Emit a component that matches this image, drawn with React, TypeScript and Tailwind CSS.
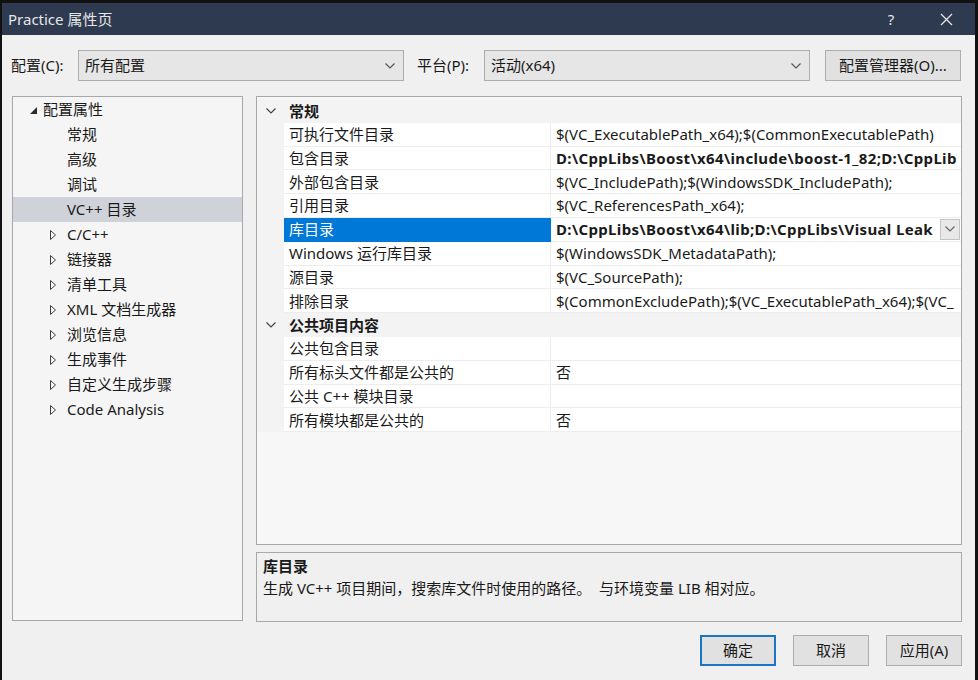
import React from 'react';

const font = "font-['Noto_Sans','Noto_Sans_CJK_SC',sans-serif]";

const Chevron: React.FC<{ className?: string }> = ({ className }) => (
  <svg width="10" height="6" viewBox="0 0 10 6" className={className}>
    <path d="M0.5 0.5L5 5L9.5 0.5" fill="none" stroke="currentColor" strokeWidth="1.2" />
  </svg>
);

const ExpandedArrow = () => (
  <svg width="7" height="7" viewBox="0 0 7 7">
    <polygon points="7,0 7,7 0,7" fill="#2b2b2b" />
  </svg>
);

const CollapsedArrow = () => (
  <svg width="6" height="10" viewBox="0 0 6 10">
    <polygon points="0.5,0.5 5.5,5 0.5,9.5" fill="none" stroke="#3c3c3c" strokeWidth="1" />
  </svg>
);

const treeItems: { label: string; collapsed?: boolean; selected?: boolean }[] = [
  { label: '常规' },
  { label: '高级' },
  { label: '调试' },
  { label: 'VC++ 目录', selected: true },
  { label: 'C/C++', collapsed: true },
  { label: '链接器', collapsed: true },
  { label: '清单工具', collapsed: true },
  { label: 'XML 文档生成器', collapsed: true },
  { label: '浏览信息', collapsed: true },
  { label: '生成事件', collapsed: true },
  { label: '自定义生成步骤', collapsed: true },
  { label: 'Code Analysis', collapsed: true },
];

type Row =
  | { kind: 'header'; label: string }
  | { kind: 'prop'; name: string; value: string; bold?: boolean; selected?: boolean };

const rows: Row[] = [
  { kind: 'header', label: '常规' },
  { kind: 'prop', name: '可执行文件目录', value: '$(VC_ExecutablePath_x64);$(CommonExecutablePath)' },
  { kind: 'prop', name: '包含目录', value: 'D:\\CppLibs\\Boost\\x64\\include\\boost-1_82;D:\\CppLib', bold: true },
  { kind: 'prop', name: '外部包含目录', value: '$(VC_IncludePath);$(WindowsSDK_IncludePath);' },
  { kind: 'prop', name: '引用目录', value: '$(VC_ReferencesPath_x64);' },
  { kind: 'prop', name: '库目录', value: 'D:\\CppLibs\\Boost\\x64\\lib;D:\\CppLibs\\Visual Leak', bold: true, selected: true },
  { kind: 'prop', name: 'Windows 运行库目录', value: '$(WindowsSDK_MetadataPath);' },
  { kind: 'prop', name: '源目录', value: '$(VC_SourcePath);' },
  { kind: 'prop', name: '排除目录', value: '$(CommonExcludePath);$(VC_ExecutablePath_x64);$(VC_' },
  { kind: 'header', label: '公共项目内容' },
  { kind: 'prop', name: '公共包含目录', value: '' },
  { kind: 'prop', name: '所有标头文件都是公共的', value: '否' },
  { kind: 'prop', name: '公共 C++ 模块目录', value: '' },
  { kind: 'prop', name: '所有模块都是公共的', value: '否' },
];

const Combo: React.FC<{ value: string }> = ({ value }) => (
  <div className="w-[326px] h-[31px] flex items-center justify-between pl-[6px] pr-[8px] bg-[#e6e6e6] border border-[#adadad]">
    <span>{value}</span>
    <Chevron className="text-[#555]" />
  </div>
);

const Button: React.FC<{ label: string; primary?: boolean }> = ({ label, primary }) => (
  <div
    className={`w-[76px] h-[31px] flex items-center justify-center bg-[#e1e1e1] ${
      primary ? 'border-2 border-[#1c74c4]' : 'border border-[#adadad]'
    }`}
  >
    {label}
  </div>
);

export default function App() {
  return (
    <div className={`w-[978px] h-[680px] bg-[#111] pt-[3px] pl-[2px] pr-[3px] overflow-hidden text-[15px] text-[#1a1a1a] ${font}`}>
      <div className="h-full flex flex-col bg-[#f0f0f0]">
        {/* Title bar */}
        <div className="h-[32px] shrink-0 flex items-center bg-[#2e3a50] text-[#e6e6e6] pl-[6px]">
          <span className="flex-1">Practice 属性页</span>
          <span className="w-[20px] text-center mr-[39px]">?</span>
          <svg width="13" height="13" viewBox="0 0 13 13" className="mr-[22px]">
            <path d="M1 1L12 12M12 1L1 12" stroke="#e6e6e6" strokeWidth="1.3" />
          </svg>
        </div>

        {/* Config toolbar */}
        <div className="flex items-center mt-[15px] pl-[9px] pr-[12px]">
          <span className="w-[67px]">配置(C):</span>
          <Combo value="所有配置" />
          <span className="ml-[13px] w-[67px]">平台(P):</span>
          <Combo value="活动(x64)" />
          <div className="ml-[15px] w-[136px] h-[31px] flex items-center justify-center bg-[#e1e1e1] border border-[#adadad]">
            配置管理器(O)...
          </div>
        </div>

        {/* Main area */}
        <div className="flex mt-[15px] pl-[10px] gap-[13px]">
          {/* Tree */}
          <div className="w-[231px] h-[525px] bg-[#f5f5f5] border border-[#a8a8a8]">
            <div className="h-[25px] flex items-center">
              <span className="w-[30px] flex justify-end pr-[6px] pt-[1px]">
                <ExpandedArrow />
              </span>
              <span>配置属性</span>
            </div>
            {treeItems.map((item) => (
              <div
                key={item.label}
                className={`h-[25px] flex items-center ${item.selected ? 'bg-[#cfd2d9]' : ''}`}
              >
                <span className="w-[54px] flex justify-end pr-[11px]">
                  {item.collapsed && <CollapsedArrow />}
                </span>
                <span>{item.label}</span>
              </div>
            ))}
          </div>

          {/* Right column */}
          <div className="flex flex-col w-[706px]">
            <div className="h-[449px] bg-[#f7f7f7] border border-[#a8a8a8] pt-[2px] overflow-hidden">
              {rows.map((row, i) =>
                row.kind === 'header' ? (
                  <div key={i} className="h-[23.8px] flex items-center bg-[#f3f3f3]">
                    <span className="w-[27px] flex justify-center">
                      <Chevron className="text-[#444]" />
                    </span>
                    <span className="pl-[5px] font-bold">{row.label}</span>
                  </div>
                ) : (
                  <div key={i} className="h-[23.8px] flex">
                    <span className="w-[27px] shrink-0 bg-[#f3f3f3]" />
                    <div
                      className={`w-[267px] shrink-0 flex items-center pl-[5px] border-b border-r ${
                        row.selected
                          ? 'bg-[#0078d7] text-white border-[#0078d7]'
                          : 'bg-white border-[#ededed]'
                      }`}
                    >
                      {row.name}
                    </div>
                    <div className="flex-1 min-w-0 flex items-center bg-white border-b border-[#ededed] pl-[5px]">
                      <span
                        className={`flex-1 min-w-0 whitespace-nowrap overflow-hidden ${
                          row.bold ? 'font-bold tracking-[0.35px]' : ''
                        }`}
                      >
                        {row.value}
                      </span>
                      {row.selected && (
                        <span className="w-[20px] h-[21px] shrink-0 mr-[1px] flex items-center justify-center bg-[#e8e8e8] border border-[#c4c4c4]">
                          <Chevron className="text-[#666]" />
                        </span>
                      )}
                    </div>
                  </div>
                )
              )}
            </div>

            {/* Description */}
            <div className="mt-[7px] h-[70px] border border-[#a8a8a8] px-[6px] pt-[2px] leading-[22px]">
              <div className="font-bold">库目录</div>
              <div>生成 VC++ 项目期间，搜索库文件时使用的路径。&nbsp;&nbsp;与环境变量 LIB 相对应。</div>
            </div>

            {/* Buttons */}
            <div className="flex justify-end gap-[17px] mt-[13px]">
              <Button label="确定" primary />
              <Button label="取消" />
              <Button label="应用(A)" />
            </div>
          </div>
        </div>
      </div>
    </div>
  );
}
